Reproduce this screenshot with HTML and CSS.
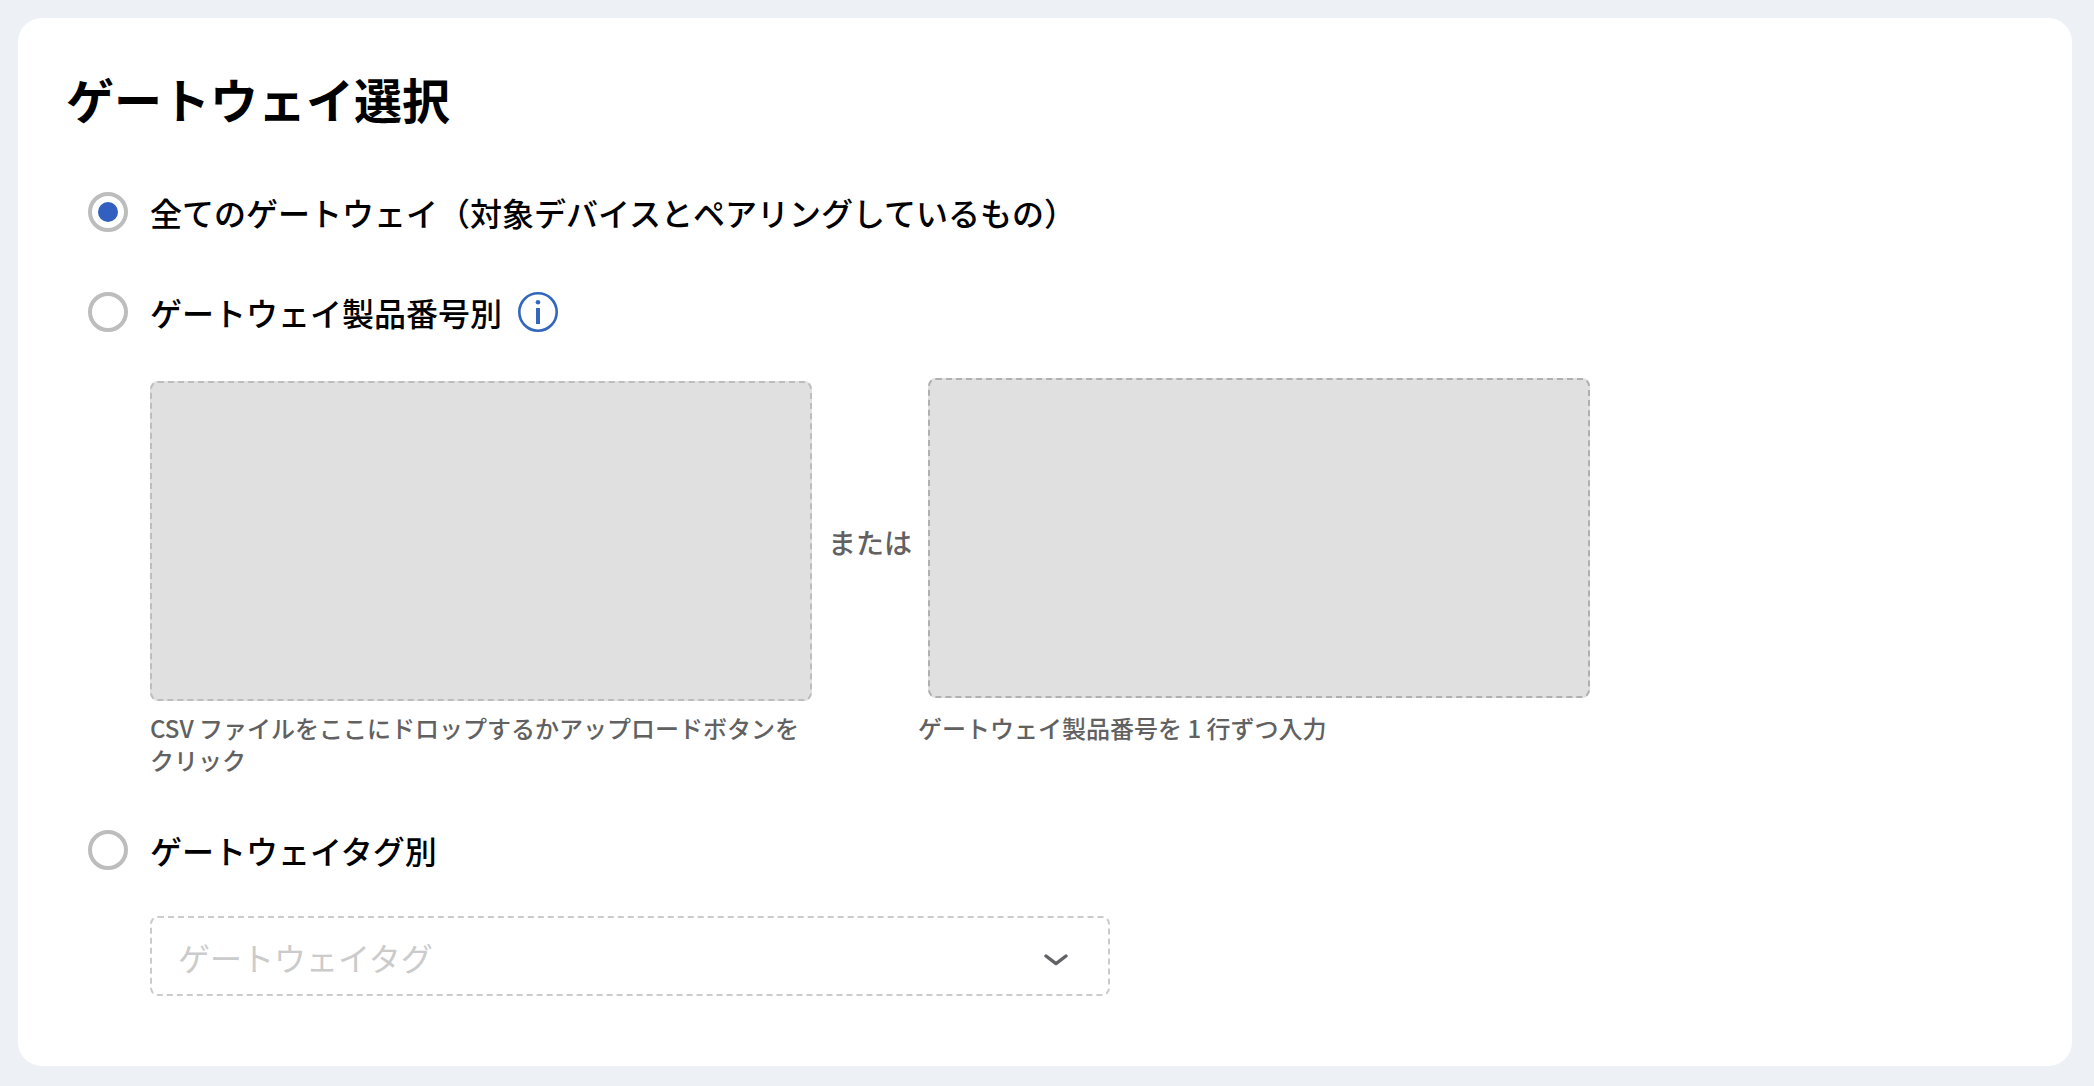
FILE: index.html
```html
<!DOCTYPE html>
<html lang="ja">
<head>
  <meta charset="utf-8">
  <meta name="viewport" content="width=device-width, initial-scale=1">
  <title>ゲートウェイ選択</title>
  <link rel="stylesheet" href="styles.css">
</head>
<body>
  <main class="card">
    <h1 class="title">ゲートウェイ選択</h1>
    <form class="options">
      <section class="option">
        <div class="choice">
          <input class="radio" type="radio" name="gateway" id="gateway-all" checked>
          <label for="gateway-all">全てのゲートウェイ（対象デバイスとペアリングしているもの）</label>
        </div>
      </section>

      <section class="option">
        <div class="choice">
          <input class="radio" type="radio" name="gateway" id="gateway-number">
          <label for="gateway-number">ゲートウェイ製品番号別</label>
          <button class="info" type="button" aria-label="ヘルプ">
            <svg viewBox="0 0 40 40" aria-hidden="true">
              <circle cx="20" cy="20" r="18.7" fill="none" stroke="currentColor" stroke-width="2.6"/>
              <circle cx="20" cy="10.3" r="2.3" fill="currentColor"/>
              <rect x="18" y="16" width="4" height="16" fill="currentColor"/>
            </svg>
          </button>
        </div>
        <div class="sources">
          <div class="source">
            <input class="box box-drop" type="file" id="csv" accept=".csv" disabled>
            <label class="caption" for="csv">CSV ファイルをここにドロップするかアップロードボタンをクリック</label>
          </div>
          <span class="or">または</span>
          <div class="source">
            <textarea class="box box-list" id="numbers" disabled></textarea>
            <label class="caption" for="numbers">ゲートウェイ製品番号を 1 行ずつ入力</label>
          </div>
        </div>
      </section>

      <section class="option">
        <div class="choice">
          <input class="radio" type="radio" name="gateway" id="gateway-tag">
          <label for="gateway-tag" id="tag-label">ゲートウェイタグ別</label>
        </div>
        <div class="tag">
          <select class="tag-select" aria-labelledby="tag-label" disabled>
            <option>ゲートウェイタグ</option>
          </select>
          <svg class="chevron" viewBox="0 0 24 12" aria-hidden="true">
            <path d="M2 2 L12 9.6 L22 2" fill="none" stroke="currentColor" stroke-width="3.4" stroke-linecap="round" stroke-linejoin="round"/>
          </svg>
        </div>
      </section>
    </form>
  </main>
</body>
</html>
```

FILE: styles.css
```css
* {
  box-sizing: border-box;
}

body {
  margin: 0;
  padding: 18px 22px 20px 18px;
  background: #edf1f6;
  color: #000;
  font-family: "Noto Sans CJK JP", sans-serif;
  font-size: 32px;
  line-height: 40px;
}

.card {
  padding: 44px 48px 70px;
  border-radius: 24px;
  background: #fff;
}

.title {
  margin: 0 0 58px;
  font-size: 48px;
  font-weight: 700;
  line-height: 72px;
}

.options {
  display: flex;
  flex-direction: column;
  padding-left: 22px;
}

.option + .option {
  margin-top: 60px;
}

.option:last-child {
  margin-top: 54px;
}

.choice {
  display: flex;
  align-items: center;
  font-weight: 500;
}

.radio {
  flex: none;
  display: grid;
  place-items: center;
  appearance: none;
  width: 40px;
  height: 40px;
  margin: 0 22px 0 0;
  border: 4px solid #bdbdbd;
  border-radius: 50%;
  background: #fff;
}

.radio:checked::before {
  content: "";
  width: 20px;
  height: 20px;
  border-radius: 50%;
  background: #325fc0;
}

.info {
  flex: none;
  width: 40px;
  height: 40px;
  margin-left: 16px;
  padding: 0;
  border: 0;
  background: none;
  color: #3267bd;
}

.info svg {
  display: block;
}

.sources {
  display: flex;
  margin: 46px 0 0 62px;
}

.source {
  display: flex;
  flex-direction: column;
  flex: 0 1 662px;
}

.source:last-child {
  flex-basis: 672px;
}

.box {
  display: block;
  height: 320px;
  border: 2px dashed #bdbdbd;
  border-radius: 8px;
  background: #e0e0e0;
  resize: none;
}

.box-drop {
  width: 100%;
  margin: 3px 0 11px;
  color: transparent;
}

.box-drop::file-selector-button {
  display: none;
}

.box-list {
  margin: 0 0 14px 10px;
  border-color: #b0b0b0;
}

.caption {
  color: #616161;
  font-size: 24px;
  font-weight: 500;
  line-height: 32px;
}

.or {
  flex: none;
  margin: 144px 6px 0 16px;
  color: #616161;
  font-size: 28px;
  font-weight: 500;
}

.tag {
  position: relative;
  max-width: 960px;
  margin: 46px 0 0 62px;
}

.tag-select {
  display: block;
  appearance: none;
  width: 100%;
  height: 80px;
  padding: 2px 80px 0 26px;
  border: 2px dashed #cbcbcb;
  border-radius: 8px;
  background: #fff;
  color: #cbcbcb;
  font: inherit;
  opacity: 1;
}

.chevron {
  position: absolute;
  top: 38px;
  right: 42px;
  width: 24px;
  height: 12px;
  color: #616166;
  pointer-events: none;
}
```
